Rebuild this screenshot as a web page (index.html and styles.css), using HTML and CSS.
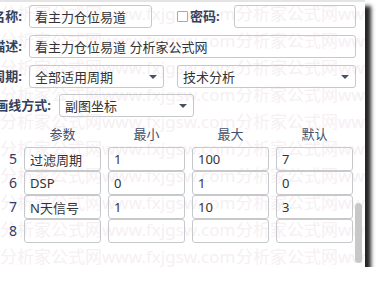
FILE: index.html
```html
<!DOCTYPE html>
<html lang="zh-CN">
<head>
  <meta charset="UTF-8">
  <meta name="viewport" content="width=device-width, initial-scale=1.0">
  <title>公式参数</title>
  <link rel="stylesheet" href="styles.css">
</head>
<body>
<div class="dialog">
  <div class="watermark">
    <div class="wm-line"><span>分析家公式网www.fxjgsw.com</span><span>分析家公式网www.fxjgsw.com</span></div>
    <div class="wm-line"><span>分析家公式网www.fxjgsw.com</span><span>分析家公式网www.fxjgsw.com</span></div>
    <div class="wm-line"><span>分析家公式网www.fxjgsw.com</span><span>分析家公式网www.fxjgsw.com</span></div>
    <div class="wm-line"><span>分析家公式网www.fxjgsw.com</span><span>分析家公式网www.fxjgsw.com</span></div>
    <div class="wm-line"><span>分析家公式网www.fxjgsw.com</span><span>分析家公式网www.fxjgsw.com</span></div>
    <div class="wm-line"><span>分析家公式网www.fxjgsw.com</span><span>分析家公式网www.fxjgsw.com</span></div>
    <div class="wm-line"><span>分析家公式网www.fxjgsw.com</span><span>分析家公式网www.fxjgsw.com</span></div>
    <div class="wm-line"><span>分析家公式网www.fxjgsw.com</span><span>分析家公式网www.fxjgsw.com</span></div>
    <div class="wm-line"><span>分析家公式网www.fxjgsw.com</span><span>分析家公式网www.fxjgsw.com</span></div>
    <div class="wm-line"><span>分析家公式网www.fxjgsw.com</span><span>分析家公式网www.fxjgsw.com</span></div>
  </div>

  <div class="content">
    <div class="row">
      <label class="label" for="f-name">名称:</label>
      <input class="field name" id="f-name" value="看主力仓位易道">
      <input class="check" type="checkbox" id="f-lock">
      <label class="label pwd" for="f-pwd">密码:</label>
      <input class="field pwd-input" id="f-pwd">
    </div>
    <div class="row">
      <label class="label" for="f-desc">描述:</label>
      <input class="field desc" id="f-desc" value="看主力仓位易道 分析家公式网">
    </div>
    <div class="row">
      <label class="label" for="f-period">周期:</label>
      <div class="select period">
        <select id="f-period"><option>全部适用周期</option></select>
      </div>
      <div class="select kind">
        <select><option>技术分析</option></select>
      </div>
    </div>
    <div class="row last">
      <label class="label wide" for="f-draw">画线方式:</label>
      <div class="select draw">
        <select id="f-draw"><option>副图坐标</option></select>
      </div>
    </div>

    <div class="params">
      <div></div>
      <div class="head">参数</div>
      <div class="head">最小</div>
      <div class="head">最大</div>
      <div class="head">默认</div>

      <div class="num">5</div>
      <input class="field" value="过滤周期">
      <input class="field" value="1">
      <input class="field" value="100">
      <input class="field" value="7">

      <div class="num">6</div>
      <input class="field" value="DSP">
      <input class="field" value="0">
      <input class="field" value="1">
      <input class="field" value="0">

      <div class="num">7</div>
      <input class="field" value="N天信号">
      <input class="field" value="1">
      <input class="field" value="10">
      <input class="field" value="3">

      <div class="num">8</div>
      <input class="field" value="">
      <input class="field" value="">
      <input class="field" value="">
      <input class="field" value="">
    </div>
  </div>

  <div class="scrollbar"></div>
</div>
</body>
</html>
```

FILE: styles.css
```css
body {
  margin: 0;
  background-color: #fff;
  overflow: hidden;
  font-family: "Noto Sans", "Noto Sans CJK SC", sans-serif;
  font-size: 13px;
  color: #333;
}
.dialog {
  position: relative;
  width: 365px;
  height: 267px;
  box-sizing: border-box;
  border-top: 2px solid #e4e4e4;
  padding-top: 3px;
  background-color: #fff;
  box-shadow: 6px 6px 4px rgba(0,0,0,0.85);
}
.watermark {
  position: absolute;
  top: -2px;
  left: 0;
  right: 0;
  bottom: 0;
  overflow: hidden;
  color: #f6f0f3;
  font-size: 17px;
  line-height: 27px;
}
.wm-line {
  display: flex;
  white-space: nowrap;
}
.wm-line span {
  flex: none;
  width: 236px;
}
.content {
  position: relative;
}
.row {
  display: flex;
  align-items: center;
  height: 23px;
  margin-bottom: 7px;
}
.row.last {
  margin-bottom: 0;
  margin-top: -1px;
}
.label {
  flex: none;
  width: 22px;
  margin-right: 7px;
  display: flex;
  justify-content: flex-end;
  white-space: nowrap;
  font-weight: bold;
  color: #35405a;
  line-height: 23px;
}
.label.wide {
  width: 51px;
  margin-right: 8px;
}
.label.pwd {
  width: auto;
  margin-left: 2px;
  margin-right: 14px;
}
.field {
  flex: none;
  height: 23px;
  box-sizing: border-box;
  border: 1px solid #c6c8cc;
  border-radius: 3px;
  background: transparent;
  padding: 0 5px;
  font: inherit;
  color: #333;
  outline: none;
}
.name { width: 123px; }
.pwd-input { width: 122px; }
.desc { width: 327px; }
.check {
  appearance: none;
  flex: none;
  width: 11px;
  height: 11px;
  margin: 0 0 0 25px;
  border: 1px solid #a4a8b0;
  border-radius: 1px;
  background: #fff;
}
.select {
  position: relative;
  flex: none;
  height: 23px;
}
.select select {
  appearance: none;
  width: 100%;
  height: 23px;
  box-sizing: border-box;
  border: 1px solid #c6c8cc;
  border-radius: 3px;
  background: transparent;
  padding: 0 5px;
  font: inherit;
  color: #333;
}
.select::after {
  content: "";
  position: absolute;
  right: 7px;
  top: 10px;
  border-left: 4px solid transparent;
  border-right: 4px solid transparent;
  border-top: 4px solid #4a5068;
}
.period { width: 135px; }
.kind { width: 179px; margin-left: 13px; }
.draw { width: 135px; }
.params {
  display: grid;
  grid-template-columns: 17px 77px 77px 77px 77px;
  grid-template-rows: 30px;
  grid-auto-rows: 24px;
  column-gap: 7px;
  row-gap: 0;
}
.params .field {
  width: 77px;
  height: 24px;
  margin-bottom: 6px;
}
.head {
  text-align: center;
  padding-top: 4px;
  line-height: 26px;
  color: #45506a;
}
.num {
  text-align: right;
  line-height: 24px;
  font-size: 14px;
  color: #2d3e66;
}
.scrollbar {
  position: absolute;
  right: 3px;
  top: 201px;
  width: 7px;
  height: 60px;
  border-radius: 4px;
  background-color: #c8c8c8;
}
```
